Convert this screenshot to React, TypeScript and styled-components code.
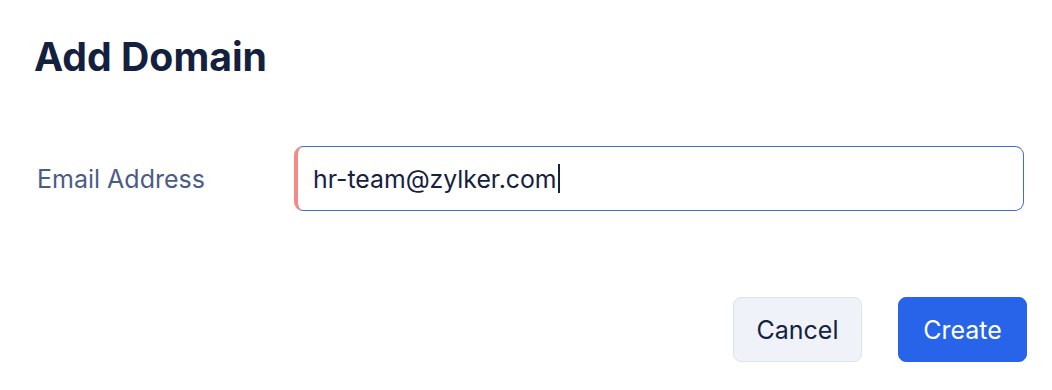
import styled, { createGlobalStyle } from "styled-components";

const GlobalStyle = createGlobalStyle`
  html, body {
    margin: 0;
    padding: 0;
    background: #ffffff;
    font-family: Inter, "Noto Sans", sans-serif;
  }
`;

const Dialog = styled.div`
  width: 1052px;
  height: 390px;
  box-sizing: border-box;
  padding: 37px 28px 0 34px;
  display: flex;
  flex-direction: column;
`;

const Title = styled.h1`
  margin: 0;
  font-size: 39.2px;
  line-height: 40px;
  font-weight: 700;
  color: #13213f;
`;

const Row = styled.div`
  display: flex;
  align-items: center;
  margin-top: 69px;
`;

const Label = styled.label`
  width: 260px;
  padding-left: 3px;
  box-sizing: border-box;
  font-size: 25px;
  color: #4d5c86;
`;

const Field = styled.div`
  flex: 1;
  height: 65px;
  box-sizing: border-box;
  border: 1px solid #3f6fd0;
  border-left: 4px solid #f28a85;
  border-radius: 9px;
  display: flex;
  align-items: center;
  padding-left: 15px;
  font-size: 24.8px;
  color: #16213f;
`;

const Caret = styled.span`
  display: inline-block;
  width: 2px;
  height: 29px;
  background: #16213f;
  margin-left: 1px;
`;

const Actions = styled.div`
  display: flex;
  justify-content: flex-end;
  gap: 36px;
  margin-top: 86px;
  margin-right: -3px;
`;

const Button = styled.button<{ $primary?: boolean }>`
  height: 65px;
  min-width: 129px;
  padding: 0 20px;
  border-radius: 8px;
  font-family: inherit;
  font-size: 25px;
  cursor: pointer;
  border: 1px solid ${({ $primary }) => ($primary ? "#2864ea" : "#dde2ef")};
  background: ${({ $primary }) => ($primary ? "#2864ea" : "#eff2f9")};
  color: ${({ $primary }) => ($primary ? "#ffffff" : "#16213f")};
`;

export default function App() {
  return (
    <>
      <GlobalStyle />
      <Dialog>
        <Title>Add Domain</Title>
        <Row>
          <Label>Email Address</Label>
          <Field>
            hr-team@zylker.com
            <Caret />
          </Field>
        </Row>
        <Actions>
          <Button>Cancel</Button>
          <Button $primary>Create</Button>
        </Actions>
      </Dialog>
    </>
  );
}
